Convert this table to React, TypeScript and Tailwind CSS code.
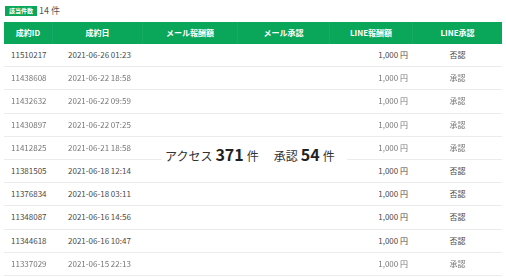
const jp = "font-['Noto_Sans_CJK_JP','Noto_Sans',sans-serif]";

type Row = { id: string; date: string; status: string; soft?: boolean };

const rows: Row[] = [
  { id: '11510217', date: '2021-06-26 01:23', status: '否認' },
  { id: '11438608', date: '2021-06-22 18:58', status: '承認', soft: true },
  { id: '11432632', date: '2021-06-22 09:59', status: '承認', soft: true },
  { id: '11430897', date: '2021-06-22 07:25', status: '承認', soft: true },
  { id: '11412825', date: '2021-06-21 18:58', status: '承認', soft: true },
  { id: '11381505', date: '2021-06-18 12:14', status: '否認' },
  { id: '11376834', date: '2021-06-18 03:11', status: '否認' },
  { id: '11348087', date: '2021-06-16 14:56', status: '否認' },
  { id: '11344618', date: '2021-06-16 10:47', status: '否認' },
  { id: '11337029', date: '2021-06-15 22:13', status: '承認', soft: true },
];

const cols = 'grid grid-cols-[49px_90px_95px_92px_83px_89px]';
const headers = ['成約ID', '成約日', 'メール報酬額', 'メール承認', 'LINE報酬額', 'LINE承認'];

export default function App() {
  return (
    <div className={`relative w-[506px] h-[277px] overflow-hidden bg-white ${jp}`}>
      <div className="flex items-center gap-[2px] pl-[5px] pt-[4px] h-[18px]">
        <span className="bg-[#0aa65a] text-white text-[6px] font-bold leading-[10px] px-[4px] h-[10px]">
          該当件数
        </span>
        <span className="text-[9px] text-[#555] leading-[10px]">14 件</span>
      </div>

      <div className="px-[4px] pt-[4px]">
        <div className={`${cols} h-[22px] bg-[#0aa65a] text-white text-[8px] font-bold`}>
          {headers.map((h, i) => (
            <div
              key={h}
              className={`flex items-center justify-center ${i < 5 ? 'border-r border-white/5' : ''}`}
            >
              {h}
            </div>
          ))}
        </div>

        {rows.map((r) => (
          <div
            key={r.id}
            className={`${cols} h-[23.2px] border-b border-[#ececec] text-[8px] ${
              r.soft ? 'text-[#777] blur-[0.4px]' : 'text-[#4a4a4a]'
            }`}
          >
            <div className="flex items-center pl-[7px]">{r.id}</div>
            <div className="flex items-center pl-[15px]">{r.date}</div>
            <div />
            <div />
            <div className="flex items-center justify-end pr-[5px]">1,000 円</div>
            <div className="flex items-center justify-center">{r.status}</div>
          </div>
        ))}
      </div>

      <div className="absolute left-[162px] top-[145px] w-[185px] h-[21px] bg-white flex items-center pl-[3px] gap-[15px] text-[#333]">
        <span className="flex items-baseline gap-[3px]">
          <span className="text-[12px]">アクセス</span>
          <span className="text-[16px] font-bold text-[#222] leading-none">371</span>
          <span className="text-[12px]">件</span>
        </span>
        <span className="flex items-baseline gap-[3px]">
          <span className="text-[12px]">承認</span>
          <span className="text-[16px] font-bold text-[#222] leading-none">54</span>
          <span className="text-[12px]">件</span>
        </span>
      </div>
    </div>
  );
}
